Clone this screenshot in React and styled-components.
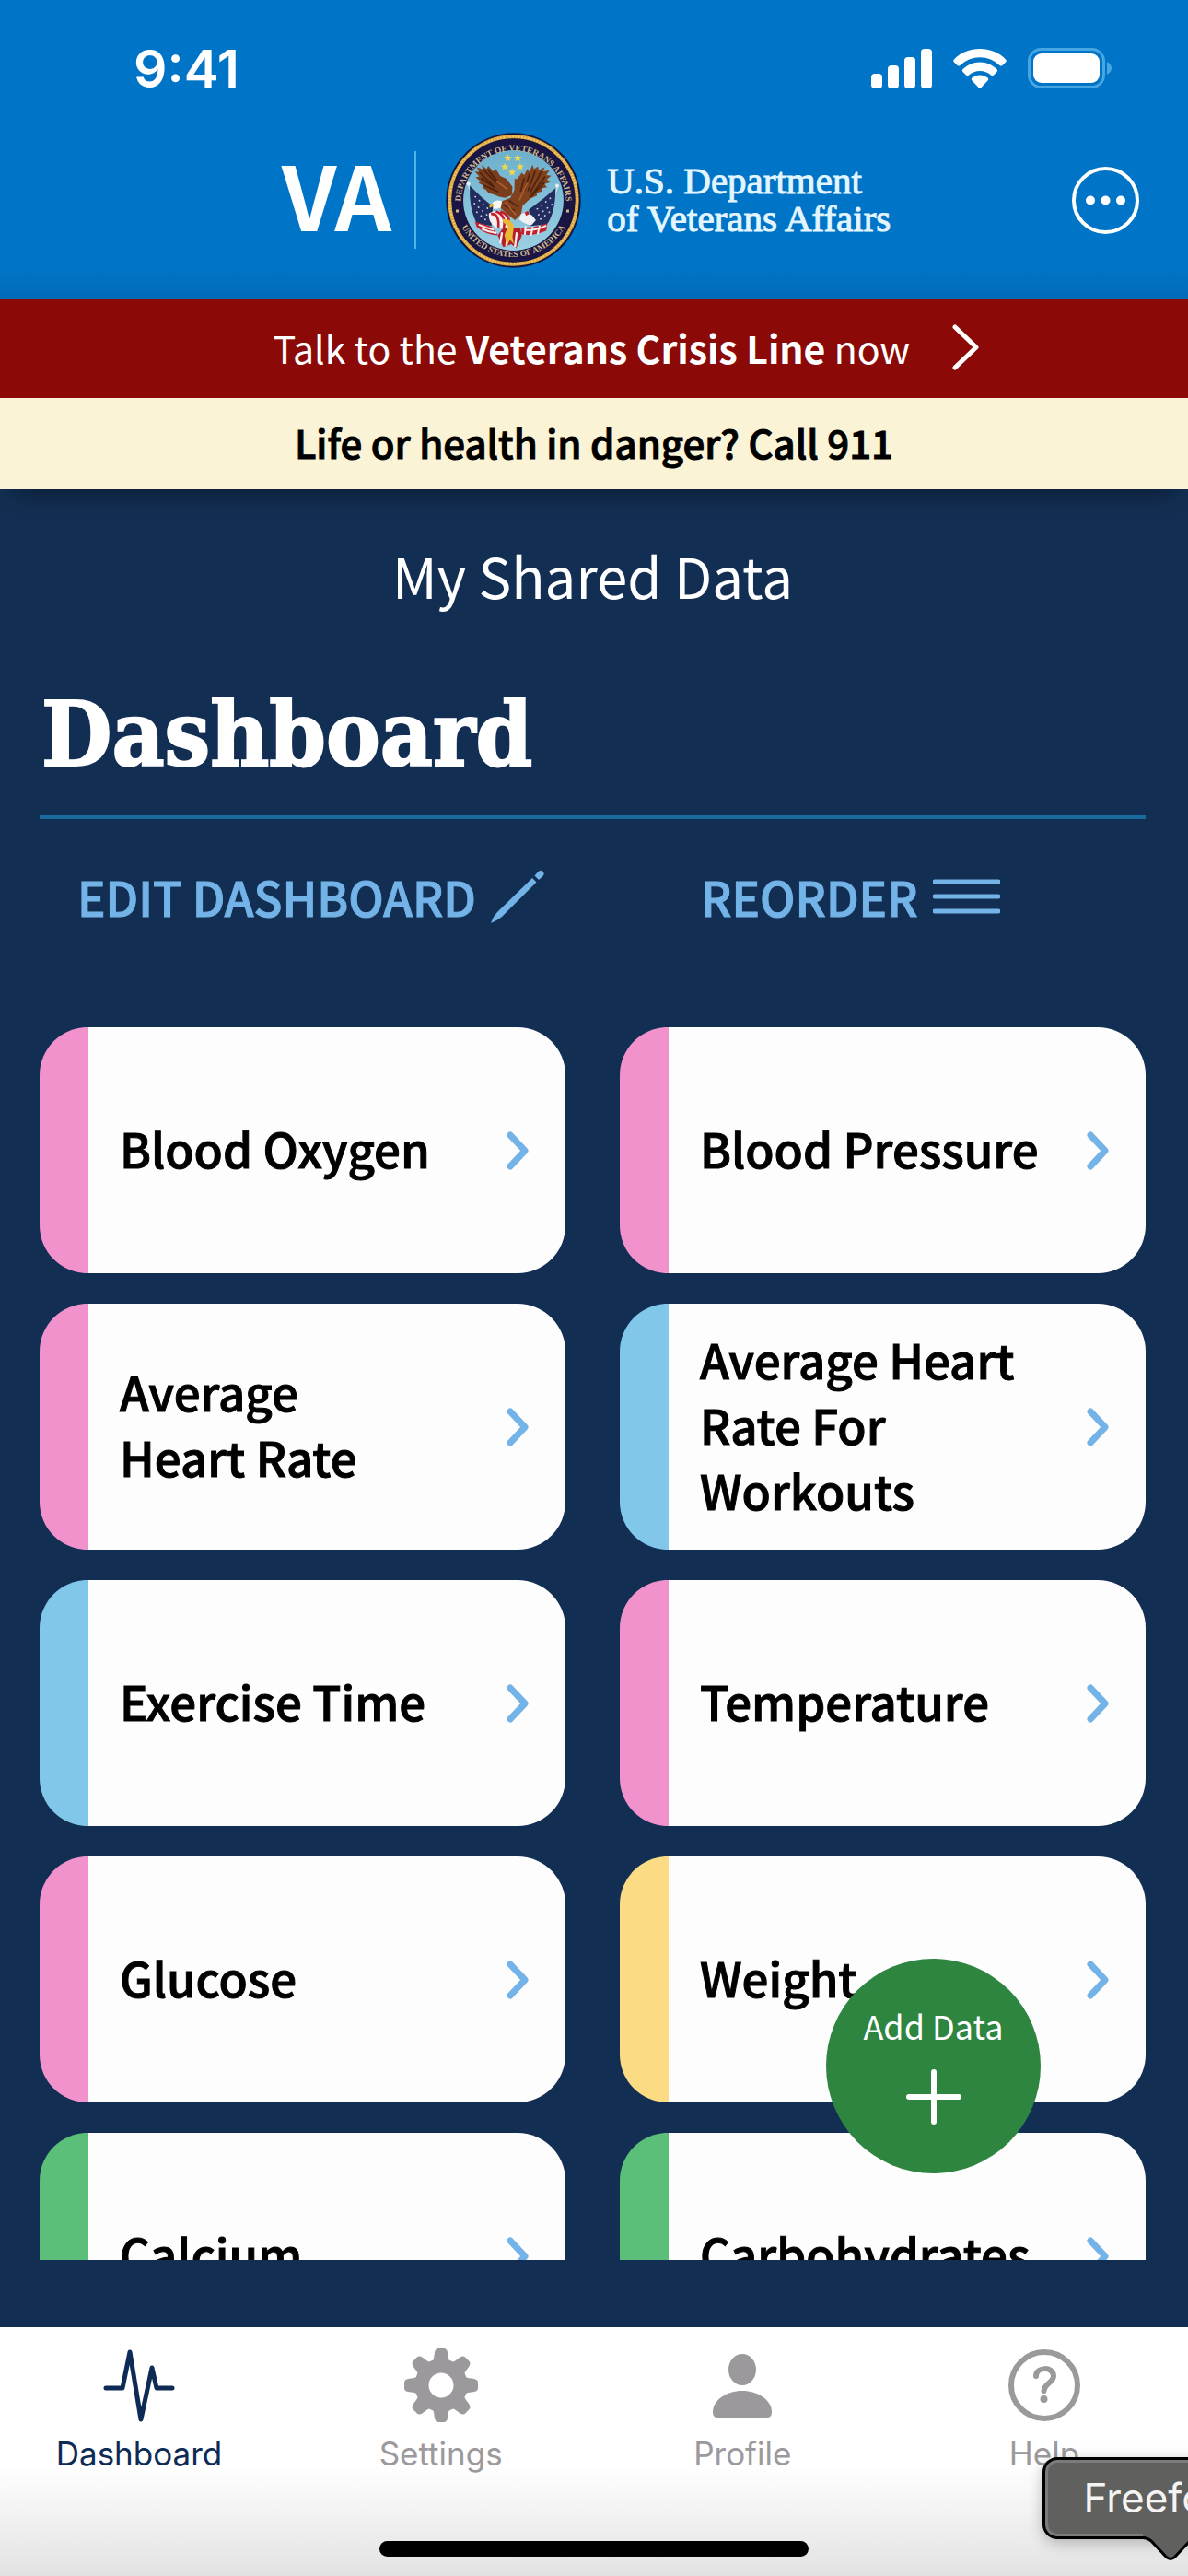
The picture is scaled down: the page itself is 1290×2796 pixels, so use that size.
import React from "react";
import styled, { createGlobalStyle } from "styled-components";

const GlobalStyle = createGlobalStyle`
    * {
        box-sizing: border-box;
    }
    body {
        margin: 0;
        background: #122f53;
        font-family: "Noto Sans CJK SC", "Open Sans", sans-serif;
    }
    button {
        padding: 0;
        border: 0;
        background: none;
        font: inherit;
        color: inherit;
        cursor: pointer;
    }
    a {
        color: inherit;
        text-decoration: none;
    }
    svg {
        display: block;
        flex: none;
    }
    h1,
    h2,
    p {
        margin: 0;
    }
`;

const Screen = styled.div`
    position: relative;
    display: flex;
    flex-direction: column;
    height: 100vh;
    overflow: hidden;
`;

const Header = styled.header`
    flex: none;
    color: #fff;
    background: linear-gradient(#0075c8 0 88%, #006cb8 100%);
`;

const StatusBar = styled.div`
    display: flex;
    align-items: center;
    justify-content: space-between;
    height: 148px;
    padding: 0 82px 0 145px;
    font-family: Inter, sans-serif;
    font-size: 57px;
    font-weight: 600;
`;

const StatusIcons = styled.div`
    display: flex;
    align-items: center;
    gap: 23px;
`;

const BrandBar = styled.div`
    display: flex;
    align-items: center;
    height: 176px;
    padding: 0 53px 38px 306px;
`;

const BrandShort = styled.span`
    font-size: 96px;
    font-weight: 700;
    line-height: 106px;
    padding-bottom: 14px;
`;

const BrandRule = styled.span`
    width: 2px;
    height: 106px;
    margin: 0 32px 0 25px;
    background: #4fb4e6;
`;

const BrandName = styled.p`
    margin-left: 28px;
    font-family: "Liberation Serif", serif;
    font-size: 41px;
    line-height: 41px;
    color: #e3f6ff;
    -webkit-text-stroke: 1px currentColor;
`;

const MoreButton = styled.button`
    margin-left: auto;
`;

const CrisisLink = styled.a`
    display: flex;
    flex: none;
    align-items: center;
    justify-content: center;
    gap: 46px;
    height: 108px;
    padding: 0 0 2px 71px;
    font-size: 41px;
    line-height: 60px;
    color: #fff;
    background: #8b0a07;
`;

const DangerNote = styled.p`
    position: relative;
    flex: none;
    padding: 18px 0 21px;
    font-size: 42px;
    font-weight: 500;
    line-height: 60px;
    text-align: center;
    color: #000;
    background: #faf3d5;
    box-shadow: 0 20px 24px -14px rgba(0, 0, 0, 0.35);
    -webkit-text-stroke: 1px currentColor;
`;

const Main = styled.main`
    position: relative;
    display: flex;
    flex: 1;
    flex-direction: column;
    min-height: 0;
    padding: 51px 46px 73px 43px;
`;

const ScreenTitle = styled.h2`
    font-size: 60px;
    font-weight: 400;
    line-height: 84px;
    text-align: center;
    color: #fff;
`;

const PageHeading = styled.h1`
    margin-top: 73px;
    padding: 0 0 30px 2px;
    border-bottom: 4px solid #186b9b;
    font-family: "DejaVu Serif Condensed", "DejaVu Serif", serif;
    font-size: 98px;
    font-weight: 700;
    font-stretch: condensed;
    line-height: 116px;
    color: #fff;
    -webkit-text-stroke: 2px currentColor;
`;

const Columns = styled.div`
    display: grid;
    grid-template-columns: 1fr 1fr;
    column-gap: 59px;
`;

const Actions = styled(Columns)`
    flex: none;
    margin: 52px 0 110px;
`;

const ActionButton = styled.button`
    display: flex;
    align-items: center;
    gap: 16px;
    height: 64px;
    padding-left: ${(props) => props.$indent}px;
    font-size: 51px;
    font-weight: 500;
    line-height: 64px;
    white-space: nowrap;
    color: #73b3e7;
    -webkit-text-stroke: 1px currentColor;
`;

const CardGrid = styled(Columns)`
    flex: 1;
    grid-auto-rows: 267px;
    row-gap: 33px;
    min-height: 0;
    overflow: hidden;
`;

const Card = styled.a`
    display: flex;
    align-items: center;
    padding: 0 40px 0 34px;
    border-left: 53px solid ${(props) => props.$accent};
    border-radius: 52px;
    font-size: 51px;
    font-weight: 500;
    line-height: 71px;
    color: #000;
    background: #fdfdfd;
`;

const CardLabel = styled.span`
    flex: 1;
    padding: 0 40px 5px 0;
    white-space: pre-line;
    -webkit-text-stroke: 1px currentColor;
`;

const AddButton = styled.button`
    position: absolute;
    right: 160px;
    bottom: 167px;
    display: flex;
    flex-direction: column;
    align-items: center;
    gap: 22px;
    width: 233px;
    height: 233px;
    padding-top: 46px;
    border-radius: 50%;
    font-size: 36px;
    line-height: 52px;
    color: #fff;
    background: #2e8540;
`;

const TabBar = styled.nav`
    position: relative;
    flex: none;
    background: linear-gradient(#fff 0 55%, #e2e2e2 100%);
`;

const Tabs = styled.div`
    display: flex;
    justify-content: space-between;
    padding: 23px 66px 0 61px;
`;

const Tab = styled.a`
    display: flex;
    flex-direction: column;
    align-items: center;
    gap: 12px;
    width: 180px;
    font-family: Inter, sans-serif;
    font-size: 35px;
    line-height: 44px;
    color: ${(props) => (props.$active ? "#0d2b54" : "#9b999c")};
`;

const HomeIndicator = styled.div`
    width: 466px;
    height: 17px;
    margin: 73px auto 21px;
    border-radius: 9px;
    background: #000;
`;

const Tooltip = styled.div`
    position: absolute;
    right: -120px;
    bottom: 40px;
    width: 278px;
    height: 89px;
    border: 3px solid #000;
    border-radius: 16px;
    font-family: Inter, sans-serif;
    font-size: 44px;
    line-height: 82px;
    text-align: center;
    color: #f4f4f4;
    background: #60605f;
    box-shadow: inset 0 0 0 3px #7b7b7b, 0 4px 16px rgba(0, 0, 0, 0.25);
`;

const TooltipTail = styled.svg`
    position: absolute;
    top: 78px;
    left: 106px;
`;

const cards = [
    { label: "Blood Oxygen", accent: "#f292cd" },
    { label: "Blood Pressure", accent: "#f292cd" },
    { label: "Average\nHeart Rate", accent: "#f292cd" },
    { label: "Average Heart Rate For Workouts", accent: "#80c7ea" },
    { label: "Exercise Time", accent: "#80c7ea" },
    { label: "Temperature", accent: "#f292cd" },
    { label: "Glucose", accent: "#f292cd" },
    { label: "Weight", accent: "#fbdb83" },
    { label: "Calcium", accent: "#5bbf7a" },
    { label: "Carbohydrates", accent: "#5bbf7a" },
];

function SignalIcon() {
    return (
        <svg width="66" height="43" viewBox="0 0 66 43" fill="#fff">
            <rect x="0" y="27" width="12" height="16" rx="4" />
            <rect x="18" y="18" width="12" height="25" rx="4" />
            <rect x="36" y="9" width="12" height="34" rx="4" />
            <rect x="54" y="0" width="12" height="43" rx="4" />
        </svg>
    );
}

function WifiIcon() {
    return (
        <svg width="58" height="43" viewBox="0 0 58 43" fill="#fff">
            <path d="M29 0C40 0 50 4 57 11.500Q58.500 13 57 14.500L53.500 18Q52 19 50.500 18A31 31 0 0 0 7.500 18Q6 19 4.500 18L1 14.500Q-.5 13 1 11.500C8 4 18 0 29 0Z" />
            <path d="M29 14.500C36.500 14.500 42.500 17.500 47.500 22Q49 23.500 47.500 25L44 28.500Q42.500 29.500 41 28.500A18 18 0 0 0 17 28.500Q15.500 29.500 14 28.500L10.500 25Q9 23.500 10.500 22C15.500 17.500 21.500 14.500 29 14.500Z" />
            <path d="M29 28.500C32.500 28.500 35.500 30 37.500 31.500Q39 33 37.500 34.500L30.500 42Q29 43.300 27.500 42L20.500 34.500Q19 33 20.500 31.500C22.500 30 25.500 28.500 29 28.500Z" />
        </svg>
    );
}

function BatteryIcon() {
    return (
        <svg width="92" height="44" viewBox="0 0 92 44">
            <rect x="1.500" y="1.500" width="81" height="41" rx="13" fill="none" stroke="#46a6e3" strokeWidth="3" />
            <rect x="6" y="6" width="72" height="32" rx="9" fill="#fff" />
            <path d="M86 15Q91 18 91 22Q91 26 86 29Z" fill="#46a6e3" />
        </svg>
    );
}

function Star({ x, y }) {
    return (
        <path
            transform={`translate(${x} ${y})`}
            d="M0-13L3.500-4.500L13-4L5.500 2L8 11L0 6L-8 11L-5.500 2L-13-4L-3.500-4.500Z"
            fill="#f0d64f"
        />
    );
}

function Seal() {
    return (
        <svg width="147" height="147" viewBox="75 42 440 440" role="img" aria-label="Seal">
            <defs>
                <path id="ring-top" d="M124 272A171 171 0 0 1 466 272" />
                <path id="ring-bottom" d="M101 252A194 194 0 0 0 489 252" />
                <linearGradient id="sky" x1="0" y1="0" x2="0" y2="1">
                    <stop offset="0" stopColor="#6cb0cd" />
                    <stop offset="1" stopColor="#9bcfe2" />
                </linearGradient>
            </defs>
            <circle cx="295" cy="262" r="219" fill="#14163a" />
            <circle cx="295" cy="262" r="207" fill="none" stroke="#d9a343" strokeWidth="12" />
            <circle cx="295" cy="262" r="207" fill="none" stroke="#f5cd6a" strokeWidth="6" strokeDasharray="5 5" />
            <circle cx="295" cy="262" r="200" fill="#1a1545" />
            <circle cx="295" cy="262" r="163" fill="url(#sky)" />
            <g fill="#cdb988" fontFamily="Liberation Serif, serif" fontWeight="700" fontSize="28" textAnchor="middle">
                <text>
                    <textPath href="#ring-top" startOffset="50%">
                        DEPARTMENT OF VETERANS AFFAIRS
                    </textPath>
                </text>
                <text>
                    <textPath href="#ring-bottom" startOffset="50%">
                        UNITED STATES OF AMERICA
                    </textPath>
                </text>
            </g>
            <rect x="108" y="292" width="9" height="9" fill="#cdb988" />
            <rect x="467" y="292" width="9" height="9" fill="#cdb988" />
            <Star x={277} y={124} />
            <Star x={309} y={124} />
            <Star x={267} y={153} />
            <Star x={317} y={153} />
            <Star x={291} y={171} />

            {/* flags */}
            <path d="M147 206L190 338" stroke="#d8e2ea" strokeWidth="4" />
            <path d="M440 212L400 338" stroke="#d8e2ea" strokeWidth="4" />
            <circle cx="149" cy="208" r="6" fill="#e8eef2" />
            <circle cx="437" cy="214" r="6" fill="#e8eef2" />
            <path d="M153 214Q190 252 228 282L224 345L175 336Q150 285 153 214Z" fill="#232c5f" />
            <path d="M432 222Q390 260 345 292L352 345L404 340Q432 300 432 222Z" fill="#232c5f" />
            <g stroke="#cfd6e6" strokeWidth="5" strokeLinecap="round" strokeDasharray="1 17">
                <path d="M171 250L215 292M168 272L214 314M176 300L212 332" />
                <path d="M415 255L362 298M420 275L365 318M412 300L372 332" />
            </g>
            <path d="M170 331Q200 340 226 348L245 376Q205 374 176 349Z" fill="#c4202c" />
            <path d="M182 341Q208 352 232 358M192 354Q215 365 240 368" stroke="#f4eeee" strokeWidth="6" fill="none" />
            <path d="M322 350Q365 352 405 336L402 360Q360 380 320 372Z" fill="#c4202c" />
            <path d="M330 358Q365 362 402 344M335 345L332 374M358 348L352 376M380 344L374 372" stroke="#f4eeee" strokeWidth="6" fill="none" />
            <path d="M244 376L262 352L318 352L322 378L304 418L288 404L262 414Z" fill="#b51d2b" />
            <path d="M258 366L252 402M276 366L272 410M306 366L300 414" stroke="#f6efef" strokeWidth="7" />

            {/* wings and body */}
            <path
                d="M192 147L208 160L213 150L229 168L238 160L252 183L272 192L292 218L290 245L268 254L249 250L232 243L214 238L206 228L194 221L199 215L181 205L189 201L172 187L184 184L169 168L184 170L176 154L196 161Z"
                fill="#7b3d1c"
            />
            <path
                d="M299 190L306 194L322 172L330 180L340 160L347 169L357 146L362 160L375 151L377 164L397 154L391 168L412 165L402 180L418 182L404 194L414 203L396 209L404 219L386 223L390 233L370 237L372 246L350 256L325 279L320 306L300 326L272 304L252 286L258 264L285 254L298 228Z"
                fill="#82411d"
            />
            <path
                d="M184 170L230 215M196 161L240 205M213 164L252 210M190 190L236 222M199 213L246 234M330 190L318 234M348 174L330 232M366 166L342 232M386 168L350 236M398 184L354 246M396 204L350 252M262 276L300 296M280 262L312 284"
                stroke="#4e220f"
                strokeWidth="5"
                fill="none"
            />
            <path d="M238 198L276 226M340 205L314 262M268 268L304 310" stroke="#a9602e" strokeWidth="5" />
            <path d="M226 270Q236 258 258 264L254 286Q240 292 230 288Z" fill="#f7f6f2" />
            <path d="M228 271L216 277L218 287L232 280Z" fill="#e3b22c" />

            {/* shield and tail */}
            <path d="M215 305Q245 284 286 322L276 352L238 350Q212 334 215 305Z" fill="#f5f0f0" />
            <path d="M222 306Q250 304 246 350M238 298Q272 310 264 350M253 297Q286 312 280 338" stroke="#c4202c" strokeWidth="8" fill="none" />
            <path d="M320 306Q350 296 368 326L354 342Q332 340 314 324Z" fill="#eef0f4" />
            <path d="M332 302L342 296L346 306L336 312Z" fill="#c4202c" />
            <path d="M260 322L284 326L297 344L292 380L296 404L284 390L274 410L266 374L278 346L262 334Z" fill="#e9b935" />
        </svg>
    );
}

function MoreIcon() {
    return (
        <svg width="73" height="73" viewBox="0 0 73 73" fill="#fff">
            <circle cx="36.500" cy="36.500" r="34.500" fill="none" stroke="#fff" strokeWidth="4" />
            <circle cx="20" cy="36.500" r="5" />
            <circle cx="36.500" cy="36.500" r="5" />
            <circle cx="53" cy="36.500" r="5" />
        </svg>
    );
}

function CrisisChevron() {
    return (
        <svg width="30" height="50" viewBox="0 0 30 50">
            <path d="M3 3L26 25L3 47" fill="none" stroke="#fff" strokeWidth="5" strokeLinecap="round" strokeLinejoin="round" />
        </svg>
    );
}

function CardChevron() {
    return (
        <svg width="24" height="42" viewBox="0 0 24 42">
            <path d="M4 4L20 21L4 38" fill="none" stroke="#73b3e7" strokeWidth="7" strokeLinecap="round" strokeLinejoin="round" />
        </svg>
    );
}

function PencilIcon() {
    return (
        <svg width="58" height="58" viewBox="0 0 58 58" fill="#73b3e7">
            <path d="M45 9L49.500 13.500L12 51Q7 55 1 57.500Q0 58 .5 56.500Q3 50 7 46Z" />
            <path d="M47.500 6.500L51 2.500Q54-.5 56.500 2Q59 4.500 56 7.500L52 11Z" />
        </svg>
    );
}

function ReorderIcon() {
    return (
        <svg width="73" height="40" viewBox="0 0 73 40">
            <path d="M2 4H71M2 20H71M2 36H71" stroke="#73b3e7" strokeWidth="5" strokeLinecap="round" />
        </svg>
    );
}

function PlusIcon() {
    return (
        <svg width="60" height="60" viewBox="0 0 60 60">
            <path d="M30 3V57M3 30H57" stroke="#fff" strokeWidth="6" strokeLinecap="round" />
        </svg>
    );
}

function PulseIcon() {
    return (
        <svg width="80" height="80" viewBox="0 0 80 80">
            <path
                d="M4 43H22L30 4L42 77L54 21L59 43H76"
                fill="none"
                stroke="currentColor"
                strokeWidth="5"
                strokeLinecap="round"
                strokeLinejoin="round"
            />
        </svg>
    );
}

function GearIcon() {
    const teeth = [0, 45, 90, 135, 180, 225, 270, 315];
    return (
        <svg width="80" height="80" viewBox="0 0 80 80">
            <g fill="currentColor">
                {teeth.map((angle) => (
                    <path
                        key={angle}
                        transform={`rotate(${angle} 40 40)`}
                        d="M27 16Q31 14.500 32 11L33 4Q34 0 37 0H43Q46 0 47 4L48 11Q49 14.500 53 16L50 26H30Z"
                    />
                ))}
            </g>
            <circle cx="40" cy="40" r="21" fill="none" stroke="currentColor" strokeWidth="15" />
        </svg>
    );
}

function ProfileIcon() {
    return (
        <svg width="80" height="80" viewBox="0 0 80 80" fill="currentColor">
            <ellipse cx="40" cy="23" rx="15" ry="17" />
            <path d="M40 46C57 46 72 56 72 69Q72 75 67 75H13Q8 75 8 69C8 56 23 46 40 46Z" />
        </svg>
    );
}

function HelpIcon() {
    return (
        <svg width="80" height="80" viewBox="0 0 80 80">
            <circle cx="40" cy="40" r="36" fill="none" stroke="currentColor" strokeWidth="6" />
            <path
                d="M31 30C31 20 50 19 50 30C50 37 40 38 39.500 46"
                fill="none"
                stroke="currentColor"
                strokeWidth="6"
                strokeLinecap="round"
            />
            <circle cx="39.500" cy="55" r="4" fill="currentColor" />
        </svg>
    );
}

function App() {
    return (
        <>
            <GlobalStyle />
            <Screen>
                <Header>
                    <StatusBar>
                        <span>9:41</span>
                        <StatusIcons>
                            <SignalIcon />
                            <WifiIcon />
                            <BatteryIcon />
                        </StatusIcons>
                    </StatusBar>
                    <BrandBar>
                        <BrandShort>VA</BrandShort>
                        <BrandRule />
                        <Seal />
                        <BrandName>
                            U.S. Department
                            <br />
                            of Veterans Affairs
                        </BrandName>
                        <MoreButton aria-label="More">
                            <MoreIcon />
                        </MoreButton>
                    </BrandBar>
                </Header>
                <CrisisLink href="#crisis">
                    <span>
                        Talk to the <b>Veterans Crisis Line</b> now
                    </span>
                    <CrisisChevron />
                </CrisisLink>
                <DangerNote>Life or health in danger? Call 911</DangerNote>
                <Main>
                    <ScreenTitle>My Shared Data</ScreenTitle>
                    <PageHeading>Dashboard</PageHeading>
                    <Actions>
                        <ActionButton $indent={41}>
                            EDIT DASHBOARD
                            <PencilIcon />
                        </ActionButton>
                        <ActionButton $indent={88}>
                            REORDER
                            <ReorderIcon />
                        </ActionButton>
                    </Actions>
                    <CardGrid>
                        {cards.map((card) => (
                            <Card key={card.label} href="#card" $accent={card.accent}>
                                <CardLabel>{card.label}</CardLabel>
                                <CardChevron />
                            </Card>
                        ))}
                    </CardGrid>
                    <AddButton>
                        Add Data
                        <PlusIcon />
                    </AddButton>
                </Main>
                <TabBar>
                    <Tabs>
                        <Tab href="#dashboard" $active>
                            <PulseIcon />
                            Dashboard
                        </Tab>
                        <Tab href="#settings">
                            <GearIcon />
                            Settings
                        </Tab>
                        <Tab href="#profile">
                            <ProfileIcon />
                            Profile
                        </Tab>
                        <Tab href="#help">
                            <HelpIcon />
                            Help
                        </Tab>
                    </Tabs>
                    <HomeIndicator />
                    <Tooltip role="tooltip">
                        Freeform
                        <TooltipTail width="60" height="32" viewBox="0 0 60 32">
                            <path d="M0 0V5Q7 6 11 11L25 27Q30 32 35 27L49 11Q53 6 60 5V0Z" fill="#60605f" />
                            <path d="M0 6.500Q7 7 11 12L25 27Q30 32 35 27L49 12Q53 7 60 6.500" fill="none" stroke="#000" strokeWidth="3" />
                        </TooltipTail>
                    </Tooltip>
                </TabBar>
            </Screen>
        </>
    );
}

export default App;
